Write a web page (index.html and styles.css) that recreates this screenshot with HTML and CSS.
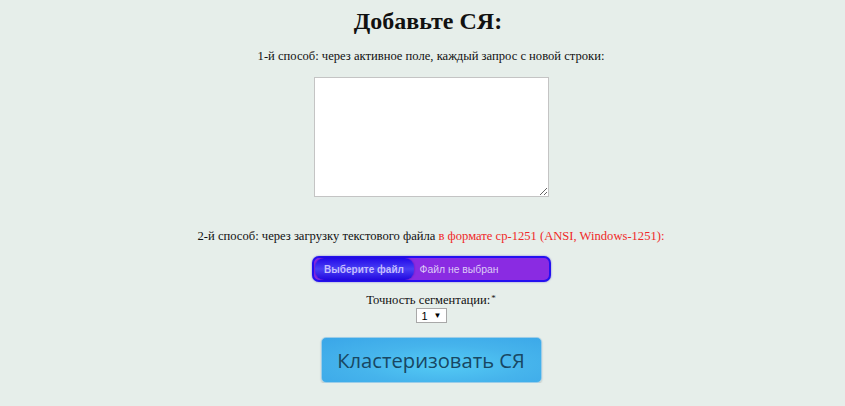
FILE: index.html
```html
<!DOCTYPE html>
<html lang="ru">
<head>
<meta charset="utf-8">
<link rel="stylesheet" href="styles.css">
</head>
<body>
<main class="page">
  <h2 class="title">Добавьте СЯ:</h2>
  <p class="hint">1-й способ: через активное поле, каждый запрос с новой строки:</p>
  <textarea class="queries"></textarea>
  <p class="hint hint-file">2-й способ: через загрузку текстового файла <span class="red">в формате cp-1251 (ANSI, Windows-1251):</span></p>
  <label class="file">
    <span class="file-btn">Выберите файл</span>
    <span class="file-name">Файл не выбран</span>
  </label>
  <div class="accuracy">Точность сегментации:<sup>*</sup></div>
  <div class="select"><span>1</span><span class="arrow">▼</span></div>
  <button class="go">Кластеризовать СЯ</button>
</main>
</body>
</html>
```
FILE: styles.css
```css
html, body {
  margin: 0;
  background: #e6eeea;
}
body {
  font-family: "Liberation Serif", "Times New Roman", serif;
  color: #111;
}
.page {
  display: flex;
  flex-direction: column;
  align-items: center;
  padding-left: 17px;
}
.title {
  margin: 6px 6px 0 0;
  font-size: 24px;
  line-height: 30px;
  font-weight: bold;
}
.hint {
  margin: 12px 0 0;
  font-size: 12.6px;
  line-height: 16px;
}
.red { color: #f02828; }
.queries {
  margin-top: 13px;
  width: 235px;
  height: 120px;
  box-sizing: border-box;
  border: 1px solid #c4c4c4;
  background: #fff;
  resize: both;
}
.hint-file {
  margin-top: 31px;
}
.file {
  margin-top: 12px;
  width: 239px;
  height: 26px;
  box-sizing: border-box;
  border: 2px solid #2410f0;
  border-radius: 7px;
  background: #8a2be2;
  display: flex;
  align-items: center;
  font-family: "Liberation Sans", Arial, sans-serif;
  font-size: 10.4px;
  box-shadow: 0 0 2px rgba(40,20,200,.6);
}
.file-btn {
  height: 22px;
  width: 99px;
  margin-left: 1px;
  display: flex;
  align-items: center;
  justify-content: center;
  border-radius: 9px;
  background: linear-gradient(#2208e8, #4a40f4 50%, #2208e0);
  color: #c4bcff;
  font-weight: bold;
  font-size: 10px;
  box-shadow: 0 0 2px rgba(20,0,120,.5);
}
.file-name {
  padding-left: 6px;
  color: #dccaf6;
}
.accuracy {
  margin-top: 10px;
  font-size: 12.6px;
  line-height: 16px;
}
.accuracy sup {
  font-size: 9px;
  line-height: 0;
  vertical-align: 3px;
  margin-left: 1px;
}
.select {
  width: 31px;
  height: 15px;
  box-sizing: border-box;
  border: 1px solid #a8a8a8;
  background: #fff;
  display: flex;
  align-items: center;
  justify-content: space-between;
  padding: 0 4px 0 5px;
  font-family: "Liberation Sans", Arial, sans-serif;
  font-size: 11px;
  color: #000;
}
.select .arrow { font-size: 8px; }
.go {
  margin-top: 14px;
  width: 221px;
  height: 46px;
  border: 1px solid #9ccde8;
  border-radius: 5px;
  background: radial-gradient(ellipse at 55% 60%, #54cbf5 0%, #46b4ec 50%, #3aa6e8 100%);
  box-shadow: 0 1px 2px rgba(0,0,0,.2);
  color: #184763;
  font-family: "Open Sans", sans-serif;
  font-size: 20.2px;
  padding: 0;
}
```
